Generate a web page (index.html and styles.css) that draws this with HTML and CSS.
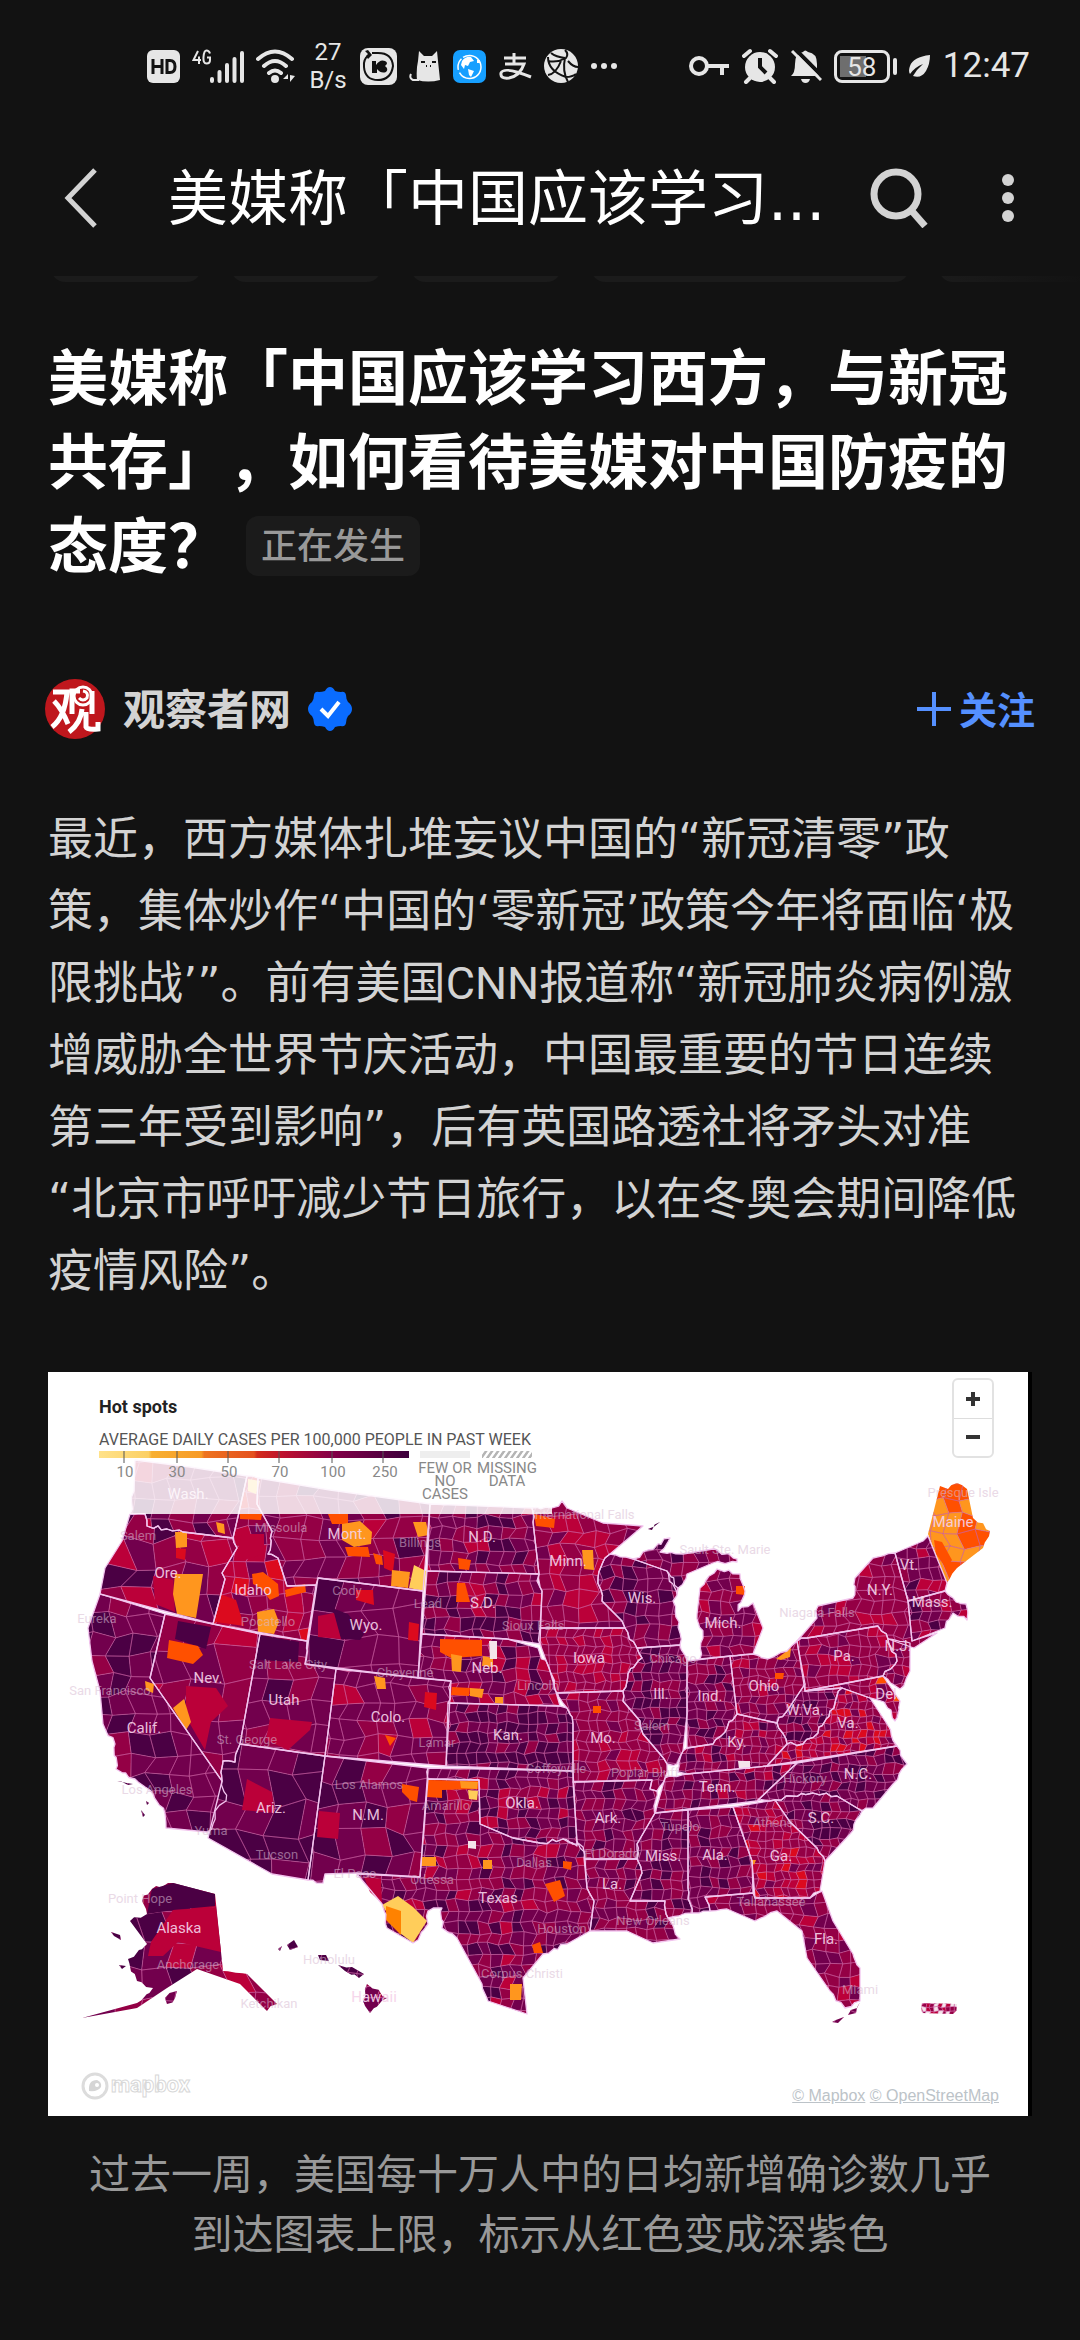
FILE: index.html
```html
<!DOCTYPE html>
<html lang="zh-CN">
<head>
<meta charset="utf-8">
<meta name="viewport" content="width=device-width, initial-scale=1">
<title>美媒称「中国应该学习西方,与新冠共存」</title>
<link rel="stylesheet" href="styles.css">
</head>
<body>
<div class="status">
  <div class="status-group">
    <svg class="icon" width="33" height="33" viewBox="0 0 33 33"><rect width="33" height="33" rx="6" fill="#e6e6e6"/><path d="M6 9v15M15 9v15M6 16.500h9M20 10.500h3q5 0 5 6t-5 6h-3z" fill="none" stroke="#121212" stroke-width="3"/></svg>
    <svg class="icon" width="52" height="36" viewBox="0 0 52 36" fill="none" stroke="#e6e6e6"><path d="M6 3 1.500 12H9M7 8.500V16M18 5.500q-1-3-3.500-3T11.500 9t3 6.500T18 12V9.500h-3" stroke-width="2"/><path d="M20 33v-2M27.500 33v-9M35 33V17M42.500 33v-22M50 33V5" stroke-width="4" stroke-linecap="round"/></svg>
    <svg class="icon" width="40" height="36" viewBox="0 0 40 36" fill="none" stroke="#e6e6e6" stroke-width="4" stroke-linecap="round"><path d="M2 11q17-15 34 0M8 18q11-10 22 0M13 25q6-5 12 0"/><circle cx="19" cy="31" r="2" fill="#e6e6e6"/><path d="M27 31h5v-5zM34 27v7l5-6z" fill="#e6e6e6" stroke="none"/></svg>
    <span class="speed"><span>27</span><span>B/s</span></span>
    <svg class="icon" width="37" height="37" viewBox="0 0 37 37"><rect width="37" height="37" rx="8" fill="#e6e6e6"/><path d="M9 7Q3 11 4 19q1 13 14 13t15-14Q32 5 18 5h-6" fill="none" stroke="#121212" stroke-width="2"/><path d="M12 13h4v4q4-6 9-4 4 2 0 5 4 3 1 6-5 2-9-3v4h-5zM8 2l4 5-4 4-2-3 2-2-3-3z" fill="#121212"/></svg>
    <svg class="icon" width="32" height="32" viewBox="0 0 32 32"><path d="M8 30Q7 20 9 11L10 1l5 5h8l5-5 1 10 2 19q-12 3-23 0z" fill="#e6e6e6"/><path d="M10 30H4q-4-2-2-6" fill="none" stroke="#e6e6e6" stroke-width="2"/><path d="M12 12h4M23 12h4M17 16h1M21 16h1" stroke="#121212" stroke-width="2"/></svg>
    <svg class="icon" width="33" height="33" viewBox="0 0 33 33"><rect width="33" height="33" rx="7" fill="#169fff"/><circle cx="16.500" cy="17" r="11.500" fill="none" stroke="#fff" stroke-width="1.500" stroke-dasharray="30 3 12 2"/><path d="M9 11q4-5 9-4l3 4-4 1-2 4-3-1-1 4-3-4zM15 19l6 2-3 6-2-2zM24 10h3v3h-3z" fill="#fff"/></svg>
    <svg class="icon" width="34" height="33" viewBox="0 0 34 33" fill="none" stroke="#e6e6e6" stroke-width="3"><path d="M6 8h22M16 3v10M7 14h19q-4 12-15 14Q2 29 3 23q3-7 30 4"/></svg>
    <svg class="icon" width="34" height="34" viewBox="0 0 34 34"><circle cx="17" cy="17" r="17" fill="#e6e6e6"/><path d="M7 4q5 4 14 5M21 1q4 4 1 8-9 5-18 3M21 9q-3 13 3 24M4 8q0 14 18 20M4 26q8-1 13-14M24 12q5 6 10 6M22 28q6 0 10-3" fill="none" stroke="#121212" stroke-width="2"/></svg>
    <svg class="icon" width="28" height="8" viewBox="0 0 28 8" fill="#e6e6e6"><circle cx="4" cy="4" r="3"/><circle cx="14" cy="4" r="3"/><circle cx="24" cy="4" r="3"/></svg>
  </div>
  <div class="status-group">
    <svg class="icon" width="41" height="24" viewBox="0 0 41 24" fill="none" stroke="#e6e6e6" stroke-width="4"><circle cx="10" cy="12" r="8"/><path d="M18 12h22M33 12v9"/></svg>
    <svg class="icon" width="36" height="36" viewBox="0 0 36 36"><circle cx="18" cy="19" r="15" fill="#e6e6e6"/><path d="M8 30l-4 4M28 30l4 4M2 8l6-5M28 3l6 5" stroke="#e6e6e6" stroke-width="4" stroke-linecap="round"/><path d="M18 10v9l6 6" fill="none" stroke="#121212" stroke-width="4"/></svg>
    <svg class="icon" width="32" height="36" viewBox="0 0 32 36"><path d="M1 28q4-3 4-12Q5 5 13 4q2-3 5 0 9 1 9 12v9l2 3zM11 31h9q-1 4-4.500 4T11 31z" fill="#e6e6e6"/><path d="M4 0l29 29" stroke="#121212" stroke-width="4"/><path d="M2 3l29 29" stroke="#e6e6e6" stroke-width="3"/></svg>
    <span class="battery">58</span>
    <svg class="icon" width="22" height="24" viewBox="0 0 22 24"><path d="M21 1Q4 3 1 12q-2 5 0 8Q6 13 14 10 8 15 4 22q8 3 13-5 4-7 4-16z" fill="#e6e6e6"/></svg>
    <time class="clock">12:47</time>
  </div>
</div>

<header class="appbar">
  <button class="icon-button" aria-label="返回"><svg width="34" height="60" viewBox="0 0 34 60"><path d="M31 2 4 30l27 28" fill="none" stroke="#d3d3d3" stroke-width="5"/></svg></button>
  <div class="appbar-title">美媒称「中国应该学习...</div>
  <button class="icon-button search" aria-label="搜索"><svg width="58" height="60" viewBox="0 0 58 60" fill="none" stroke="#d3d3d3" stroke-width="7"><circle cx="26" cy="26" r="22"/><path d="M41 42l14 16"/></svg></button>
  <button class="icon-button" aria-label="更多"><svg width="12" height="48" viewBox="0 0 12 48" fill="#d3d3d3"><circle cx="6" cy="6" r="6"/><circle cx="6" cy="24" r="6"/><circle cx="6" cy="42" r="6"/></svg></button>
</header>

<div class="chips"><i class="chip"></i><i class="chip"></i><i class="chip"></i><i class="chip chip-wide"></i><i class="chip chip-last"></i></div>

<main class="article">
  <h1 class="headline">美媒称「中国应该学习西方，与新冠共存」，如何看待美媒对中国防疫的态度？<span class="tag">正在发生</span></h1>

  <div class="author">
    <svg class="avatar" width="60" height="60" viewBox="0 0 60 60"><circle cx="30" cy="30" r="30" fill="#bf171d"/><path d="M8 13h14Q20 38 7 48M9 22q8 8 14 23M27 35V12h8M47 12v23M37 30q-1 14-13 23M41 33v15q1 3 12 2v-7" fill="none" stroke="#fff" stroke-width="5"/><circle cx="38" cy="17" r="9" fill="none" stroke="#fff" stroke-width="3"/><path d="M38 12q6 1 4 7-4 4-8 0" fill="none" stroke="#fff" stroke-width="3"/></svg>
    <span class="author-name">观察者网</span>
    <svg class="verified" width="46" height="46" viewBox="0 0 46 46"><path d="M23 1q3 0 5 4 3 1 6 1 4-1 5 3 0 4 2 7 4 3 4 7t-4 7q-2 3-2 7-1 4-5 3-3 0-6 1-2 4-5 4t-5-4q-3-1-6-1-4 1-5-3 0-4-2-7-4-3-4-7t4-7q2-3 2-7 1-4 5-3 3 0 6-1 2-4 5-4z" fill="#0a6cff"/><path d="M14 23l7 7 11-14" fill="none" stroke="#fff" stroke-width="4"/></svg>
    <button class="follow"><svg width="34" height="34" viewBox="0 0 34 34"><path d="M17 0v34M0 17h34" stroke="#5590ff" stroke-width="4"/></svg>关注</button>
  </div>

  <p class="body-text">最近，西方媒体扎堆妄议中国的“新冠清零”政策，集体炒作“中国的‘零新冠’政策今年将面临‘极限挑战’”。前有美国<span class="latin">CNN</span>报道称“新冠肺炎病例激增威胁全世界节庆活动，中国最重要的节日连续第三年受到影响”，后有英国路透社将矛头对准“北京市呼吁减少节日旅行，以在冬奥会期间降低疫情风险”。</p>

  <figure class="figure">
    <div class="map">
      <svg class="map-canvas" viewBox="0 0 980 744" role="img" aria-label="Hot spots">
        <defs>
          <pattern id="hatch" width="6" height="7" patternUnits="userSpaceOnUse" patternTransform="skewX(-35)"><rect width="3" height="7" fill="#b5b5b5"/></pattern>
          <linearGradient id="scale"><stop offset="0" stop-color="#ffe28a"/><stop offset=".16" stop-color="#fcd064"/><stop offset=".17" stop-color="#f8b032"/><stop offset=".33" stop-color="#f79a26"/><stop offset=".34" stop-color="#ee7420"/><stop offset=".5" stop-color="#e4501e"/><stop offset=".51" stop-color="#d32c1c"/><stop offset=".6" stop-color="#bc1030"/><stop offset=".75" stop-color="#850048"/><stop offset="1" stop-color="#3c003c"/></linearGradient>
        </defs>
        <g id="states"></g>
        <g id="cities" class="city"></g>
        <g id="names" class="state-name"></g>
        <rect x="40" y="70" width="464" height="72" fill="#fff" opacity=".84"/>
        <text class="map-title" x="51" y="41">Hot spots</text>
        <text class="legend-title" x="51" y="73">AVERAGE DAILY CASES PER 100,000 PEOPLE IN PAST WEEK</text>
        <rect x="51" y="79" width="310" height="7" fill="url(#scale)"/>
        <path d="M76 79v12M129 79v12M180 79v12M231 79v12M284 79v12M335 79v12" stroke="#555"/>
        <rect x="372" y="79" width="50" height="7" fill="#eee"/>
        <rect x="434" y="79" width="50" height="7" fill="url(#hatch)"/>
        <g class="legend-label">
          <text x="77" y="105">10</text><text x="129" y="105">30</text><text x="181" y="105">50</text><text x="232" y="105">70</text><text x="285" y="105">100</text><text x="337" y="105">250</text>
          <text x="397" y="101">FEW OR</text><text x="397" y="114">NO</text><text x="397" y="127">CASES</text>
          <text x="459" y="101">MISSING</text><text x="459" y="114">DATA</text>
        </g>
        <circle cx="47" cy="714" r="12" fill="#fff" stroke="#dcdcdc" stroke-width="3"/>
        <path d="M41 719q-1-11 8-11 5 2 4 7-3 5-12 4z" fill="#d5d5d5"/><circle cx="49" cy="713" r="2" fill="#fff"/>
        <text class="map-brand" x="63" y="720">mapbox</text>
      </svg>
      <div class="zoom">
        <button class="zoom-button" aria-label="放大"><svg width="16" height="16" viewBox="0 0 16 16"><path d="M8 1v14M1 8h14" stroke="#333" stroke-width="4"/></svg></button>
        <button class="zoom-button" aria-label="缩小"><svg width="16" height="16" viewBox="0 0 16 16"><path d="M1 8h14" stroke="#333" stroke-width="4"/></svg></button>
      </div>
      <div class="credits"><a href="#mapbox">© Mapbox</a> <a href="#osm">© OpenStreetMap</a></div>
    </div>
    <figcaption class="caption">过去一周，美国每十万人中的日均新增确诊数几乎到达图表上限，标示从红色变成深紫色</figcaption>
  </figure>
</main>
<script src="map.js"></script>
</body>
</html>
```

FILE: styles.css
```css
* { box-sizing: border-box; }

body {
  margin: 0;
  background: #121212;
  color: #d3d3d3;
  font-family: "Noto Sans", "Noto Sans CJK SC", sans-serif;
  text-spacing-trim: space-all;
  overflow-x: hidden;
}

button {
  display: flex;
  align-items: center;
  padding: 0;
  border: 0;
  background: none;
  color: inherit;
  font: inherit;
}

svg { display: block; flex: none; }

.status {
  display: flex;
  justify-content: space-between;
  align-items: center;
  height: 132px;
  padding: 0 50px 0 147px;
  color: #e6e6e6;
  font-family: Roboto, sans-serif;
}

.status-group { display: flex; align-items: center; gap: 12px; }

.speed {
  display: flex;
  flex-direction: column;
  align-items: center;
  width: 40px;
  font-size: 24px;
  line-height: 28px;
}

.battery {
  position: relative;
  width: 56px;
  height: 33px;
  margin-right: 7px;
  border: 3px solid #e6e6e6;
  border-radius: 8px;
  background: linear-gradient(#6e6e6e, #6e6e6e) 3px 3px / 26px 21px no-repeat;
  font-size: 26px;
  line-height: 28px;
  text-align: center;
}

.battery::after {
  content: "";
  position: absolute;
  top: 5px;
  right: -10px;
  width: 4px;
  height: 17px;
  border-radius: 2px;
  background: #e6e6e6;
}

.clock { font-size: 35px; line-height: 40px; }

.appbar {
  display: flex;
  align-items: center;
  height: 144px;
  padding: 0 66px 12px 64px;
}

.appbar-title {
  flex: 1;
  margin-left: 70px;
  padding-top: 2px;
  color: #fff;
  font-family: "DejaVu Sans", "Noto Sans CJK SC", sans-serif;
  font-size: 60px;
  line-height: 72px;
  white-space: nowrap;
}

.search { margin-right: 74px; }

.chips {
  display: flex;
  align-items: flex-end;
  gap: 30px;
  height: 6px;
  padding-left: 51px;
  overflow: hidden;
}

.chip {
  flex: none;
  width: 150px;
  height: 60px;
  border-radius: 14px;
  background: #1b1b1b;
}

.chip-wide { width: 318px; }

.chip-last { background: linear-gradient(90deg, #1b1b1b, #121212); }

.article { padding: 53px 48px 0; }

.headline {
  margin: 0;
  color: #fff;
  font-size: 60px;
  font-weight: 700;
  line-height: 84px;
}

.tag {
  display: inline-block;
  margin: 0 0 12px 18px;
  padding: 0 15px;
  border-radius: 12px;
  background: #1b1b1b;
  color: #999;
  font-size: 36px;
  font-weight: 500;
  line-height: 60px;
  vertical-align: middle;
}

.author {
  display: flex;
  align-items: center;
  height: 60px;
  margin: 91px -3px 65px;
}

.author-name {
  margin: 0 16px 0 18px;
  font-size: 42px;
  font-weight: 700;
  line-height: 60px;
}

.follow {
  gap: 8px;
  margin-left: auto;
  color: #5590ff;
  font-size: 38px;
  font-weight: 700;
  line-height: 60px;
}

.body-text {
  margin: 0 0 64px;
  padding-right: 10px;
  font-family: "DejaVu Sans", "Noto Sans CJK SC", sans-serif;
  font-size: 45px;
  line-height: 72px;
}

.latin { font-family: Roboto, sans-serif; }

.figure { margin: 0; }

.map {
  position: relative;
  border-right: 4px solid #000;
  background: #fff;
}

.map-canvas {
  width: 100%;
  height: auto;
  font-family: Roboto, sans-serif;
}

.state-name {
  fill: #f6d3ea;
  font-size: 15px;
  opacity: .9;
  text-anchor: middle;
}

.city {
  fill: #d9bcd3;
  font-size: 13px;
  opacity: .55;
  text-anchor: middle;
}

.map-title { fill: #222; font-size: 18px; font-weight: 700; }

.legend-title { fill: #555; font-size: 16px; }

.legend-label { fill: #888; font-size: 15px; text-anchor: middle; }

.map-brand {
  fill: #fff;
  stroke: #d8d8d8;
  stroke-width: 1;
  font-size: 22px;
  font-weight: 700;
}

.zoom {
  position: absolute;
  top: 6px;
  right: 34px;
  width: 42px;
  border: 2px solid #e2e2e2;
  border-radius: 6px;
}

.zoom-button { justify-content: center; width: 100%; height: 38px; }

.zoom-button + .zoom-button { border-top: 1px solid #ddd; }

.credits {
  position: absolute;
  right: 29px;
  bottom: 10px;
  font-family: "Liberation Sans", sans-serif;
  font-size: 16px;
  line-height: 20px;
}

.credits a { color: #bcc3c8; }

.caption {
  padding: 27px 36px 48px;
  color: #999;
  font-size: 41px;
  line-height: 60px;
  text-align: center;
}
```

FILE: map.js
```js
const SVG = "http://www.w3.org/2000/svg";
const COLORS = ["#4b0044", "#72004d", "#940045", "#bb0039", "#dc0a1e", "#ff5000", "#ff961e", "#ffcd5a", "#f4e4ea"];

// [outline, county size, colour mix]
const STATES = [
  ["87,88 142,95 199,104 192,136 185,166 135,160 119,157 99,154 97,142 82,142 86,119", 20, "1122301"],
  ["82,142 97,142 99,154 119,157 135,160 185,166 189,176 174,201 177,207 165,252 52,222 57,196 74,169", 26, "0112231"],
  ["199,104 210,106 209,132 224,159 220,182 230,186 239,214 268,213 259,269 165,252 177,207 174,201 189,176 185,166 192,136", 17, "1223342"],
  ["210,106 282,118 382,132 375,219 270,206 268,213 239,214 230,186 220,182 224,159 209,132", 20, "1223210"],
  ["270,206 375,219 370,306 257,292", 30, "1111201"],
  ["212,262 259,269 257,292 288,297 277,384 192,372", 23, "1101221"],
  ["117,242 212,262 192,372 187,390 175,389 174,409 102,306", 34, "1132112"],
  ["52,222 117,242 102,306 174,409 178,429 167,439 165,452 159,460 118,456 117,442 105,422 87,407 68,397 67,372 55,352 52,319 44,289 40,256", 20, "0112011"],
  ["174,409 175,389 187,390 192,372 277,384 260,508 224,502 160,466", 30, "0010010"],
  ["288,297 403,309 398,394 277,384", 17, "1121321"],
  ["277,384 380,396 372,505 309,501 277,502 275,511 260,508", 25, "0010121"],
  ["382,132 484,136 485,150 491,202 379,199", 12, "0123112"],
  ["379,199 491,202 489,209 494,219 492,272 459,267 374,262", 12, "0123120"],
  ["374,262 459,267 490,276 502,299 512,334 400,331 403,309 370,306", 12, "1120213"],
  ["400,331 512,334 519,336 525,352 525,399 398,394", 10, "0010120"],
  ["380,396 525,399 529,474 515,467 492,471 465,466 432,452 431,408 380,407", 10, "0121130"],
  ["380,407 431,408 432,452 465,466 492,471 515,467 535,475 536,486 539,516 546,529 542,559 519,572 495,582 475,606 479,642 440,629 434,612 409,566 394,556 394,536 380,539 380,552 365,571 339,556 334,532 309,502 372,505", 11, "0121123"],
  ["484,136 504,136 514,129 519,136 555,151 595,154 562,182 557,186 550,206 554,229 574,249 577,256 492,256 494,219 491,202 485,150", 15, "2323132"],
  ["492,256 577,256 589,276 594,286 580,302 575,319 509,321 502,299 492,272", 9, "2232233"],
  ["557,186 562,182 585,187 619,199 630,216 625,229 631,250 632,273 589,276 577,256 574,249 554,229 550,206", 12, "0112012"],
  ["585,187 600,178 622,166 612,180 635,182 665,177 689,187 689,190 665,191 639,202 629,222 619,199", 12, "0012102"],
  ["669,197 692,202 697,219 690,239 705,231 715,256 705,282 652,287 655,266 649,242 652,216", 11, "1212132"],
  ["589,276 632,273 639,289 639,342 635,379 629,392 619,392 612,382 595,362 592,349 575,329 575,319 580,302 594,286", 9, "0011012"],
  ["509,321 575,319 575,329 592,349 595,362 612,382 619,392 617,406 609,419 602,417 604,408 525,410 525,352 519,336", 10, "1222132"],
  ["639,289 682,284 689,342 679,356 665,372 639,376", 9, "1221012"],
  ["682,284 705,282 720,287 739,279 749,269 757,312 739,339 729,351 689,342", 9, "1232121"],
  ["635,379 639,376 665,372 679,356 689,342 729,351 739,372 719,394 639,402 630,400", 8, "1223012"],
  ["617,406 639,402 719,394 749,391 709,429 607,441", 9, "1212230"],
  ["525,410 604,408 602,417 609,419 607,441 589,472 589,487 537,487 529,469", 10, "1120121"],
  ["537,487 589,487 594,501 582,529 617,529 620,546 632,567 605,571 579,559 542,559 546,529 539,516", 10, "1120212"],
  ["607,441 640,438 640,516 644,541 620,546 617,529 582,529 594,501 589,487 589,472", 10, "1120210"],
  ["640,438 685,435 704,489 705,521 657,525 662,539 644,541 640,516", 10, "0120121"],
  ["685,435 727,428 742,450 769,476 777,489 772,519 762,526 707,526 704,489", 8, "2312423"],
  ["727,428 742,424 765,421 789,424 814,439 802,462 777,489 769,476 742,450", 9, "0110120"],
  ["709,429 749,391 849,374 859,392 845,412 825,436 814,439 789,424 765,421 742,424 727,428", 9, "0110121"],
  ["657,525 705,521 707,526 762,526 774,519 785,549 805,582 812,596 812,629 797,636 782,619 759,586 754,559 729,539 707,549 679,537 662,539", 12, "1221232"],
  ["719,394 739,372 755,372 770,361 782,339 794,316 822,326 839,352 849,374", 7, "2322314"],
  ["729,351 739,339 757,312 757,319 794,316 782,339 770,361 755,372 739,372", 8, "0121012"],
  ["757,319 835,304 852,329 847,349 836,330 822,326 794,316", 9, "2241235"],
  ["749,269 759,266 830,254 840,267 849,289 835,304 757,319", 10, "2322231"],
  ["840,267 862,271 862,299 852,317 835,304 849,289", 9, "1223212"],
  ["749,269 769,246 770,234 805,226 807,206 825,186 847,181 860,229 864,269 889,261 866,276 840,267 830,254 759,266", 12, "2223212"],
  ["847,181 875,169 880,164 899,211 897,219 860,229", 11, "1123012"],
  ["860,229 897,219 908,230 918,232 919,248 905,241 897,256 864,269", 10, "1120312"],
  ["880,162 892,114 900,117 909,111 919,117 925,146 942,159 935,176 909,196 899,211", 16, "6566556"],
  ["125,511 167,522 175,599 199,602 229,632 219,639 192,612 149,597 119,616 89,636 34,646 89,631 105,616 89,609 80,587 99,572 82,549 99,542 94,529 104,517", 28, "0120232"],
  ["239,573 246,568 250,575 242,578", 9, "0"], ["270,583 278,583 281,589 272,588", 9, "0"],
  ["290,593 304,595 316,602 311,606 297,599", 9, "0"], ["319,612 339,626 322,641 315,629", 14, "12"],
  ["230,577 234,574 232,579", 9, "0"], ["63,560 72,563 73,568 66,564", 9, "0"], ["71,593 78,594 74,597", 9, "0"],
  ["117,626 129,619 127,626 119,632", 9, "1"], ["69,409 85,412 80,413", 9, "0"], ["93,438 97,443 95,445", 9, "0"], ["98,429 101,431 99,433", 9, "0"],
  ["600,157 612,150 604,158", 9, "0"], ["784,650 796,645 790,651", 9, "1"], ["800,643 809,636 812,630 808,641", 9, "1"],
  ["874,631 909,632 905,642 874,641", 4, "3823"]
];

const PATCHES = {
  0: ["284,236 300,242 316,262 312,268 293,267 286,244", "130,249 163,255 158,277 127,267", "212,263 251,270 250,290 208,288", "104,517 125,511 167,522 167,534 125,538 99,542"],
  3: ["270,244 286,241 293,267 270,265", "138,314 168,316 180,334 163,350 157,378 138,345", "222,346 264,350 262,358 240,378 218,368", "199,407 224,420 226,441 194,438", "271,439 292,441 290,467 269,465", "316,505 333,507 334,531 322,520", "194,162 216,162 216,182 196,188 190,178", "105,204 125,208 127,240 107,232", "125,538 168,535 173,580 130,570 115,584 100,584 103,570"],
  4: ["128,176 138,177 137,188 128,186", "172,222 188,228 196,254 168,250", "335,178 347,182 345,200 336,196", "308,218 325,218 326,233 308,228", "361,250 371,252 370,269 360,268", "377,320 389,321 388,338 376,335"],
  5: ["204,202 215,200 230,212 231,224 222,228 213,216 205,212", "237,218 257,212 258,220 238,225", "280,142 300,142 300,152 284,152", "325,181 334,184 335,193 328,192", "297,175 320,175 322,185 300,184", "192,142 214,142 213,148 192,147", "121,268 150,274 155,283 145,292 119,286", "354,412 371,415 369,430 362,428 354,420", "392,267 434,268 434,284 403,286 392,280", "404,315 422,316 421,324 403,323", "337,363 348,366 342,374", "409,211 417,211 422,230 408,230", "410,186 423,188 421,198 411,197", "486,142 507,147 506,156 488,154", "688,214 697,214 697,223 688,222", "727,301 736,301 735,307 727,307", "380,408 430,409 430,417 394,418 394,426 379,425", "484,573 492,570 495,581 486,581", "497,512 512,508 517,524 506,530", "515,489 524,490 523,498 515,496", "545,334 553,334 553,341 545,341", "886,168 894,170 904,188 898,196 888,182"],
  6: ["127,202 155,202 148,246 129,242 125,222", "127,160 139,160 139,175 128,176", "168,150 176,152 177,162 170,160", "209,240 226,237 231,250 226,262 210,260", "294,152 312,149 324,160 323,172 306,175 294,168", "365,150 378,150 381,163 370,165", "344,198 362,200 360,216 343,214", "125,336 136,327 143,350 138,358", "97,309 106,312 105,321 98,318", "403,282 414,284 413,300 404,299", "435,284 445,286 445,295 434,294", "422,316 436,317 434,326 422,324", "447,325 455,325 455,332 447,331", "326,304 337,306 338,317 329,317", "534,178 545,178 546,198 536,197", "728,287 743,276 742,285 733,288", "412,409 430,410 429,417 413,416", "373,485 388,485 388,494 373,494", "435,488 444,488 444,497 435,497", "462,612 474,612 473,628 462,628", "702,488 708,488 706,493"],
  7: ["366,193 378,199 376,219 361,216", "200,107 212,109 208,122 200,119", "420,418 430,419 429,428 421,427", "334,533 350,524 365,535 379,549 372,560 365,571 352,561"],
  8: ["441,269 449,269 449,287 442,287", "420,469 428,469 428,477 420,476", "690,389 702,389 702,397 691,397"]
};

const NAMES = "Wash.,140,122|Ore.,120,201|Idaho,205,218|Mont.,299,162|N.D.,434,165|S.D.,435,231|Wyo.,318,253|Nev.,160,306|Utah,236,328|Colo.,340,345|Calif.,96,356|Neb.,439,296|Kan.,460,363|Minn.,520,189|Wis.,594,226|Mich.,675,251|Iowa,541,286|Ill.,613,322|Ind.,662,324|Ohio,716,314|Pa.,796,284|N.Y.,832,218|Vt.,861,193|Mass.,884,230|N.J.,850,274|W.Va.,757,338|Va.,800,351|Maine,905,150|Mo.,555,366|Del.,840,322|Ariz.,223,436|N.M.,320,443|Okla.,474,431|Texas,450,526|Alaska,131,556|Hawaii,326,625|Ky.,689,370|Tenn.,669,415|N.C.,810,402|S.C.,773,446|Ark.,560,446|Miss.,615,484|Ala.,667,483|Ga.,733,484|La.,564,512|Fla.,778,567";
const CITIES = "Salem,90,163|Missoula,233,155|Billings,372,170|Cody,299,218|Lead,380,231|Salt Lake City,240,292|Cheyenne,357,300|Eureka,49,246|San Francisco,62,318|St. George,199,367|Los Angeles,109,417|Yuma,163,458|Tucson,229,482|Los Alamos,321,412|Amarillo,398,433|Lamar,389,370|El Paso,307,501|Odessa,384,507|Dallas,486,490|Houston,514,556|Corpus Christi,474,601|Point Hope,92,526|Anchorage,140,592|Ketchikan,221,631|Honolulu,281,587|Pocatello,220,249|Sioux Falls,485,253|Lincoln,490,313|International Falls,535,142|Sault Ste. Marie,677,177|Presque Isle,915,120|Niagara Falls,769,240|Chicago,625,286|Salem,604,353|Poplar Bluff,597,400|Hickory,757,406|Tupelo,632,454|El Dorado,564,481|Athens,725,450|Tallahassee,723,529|New Orleans,605,548|Miami,812,617|Coffeyville,508,396";

let seed = 7;
function random() {
  seed = (seed * 16807) % 2147483647;
  return seed / 2147483647;
}

function add(parent, name, attributes) {
  const node = document.createElementNS(SVG, name);
  for (const key in attributes) node.setAttribute(key, attributes[key]);
  parent.appendChild(node);
  return node;
}

// Roughens short border segments so that coasts and rivers look natural.
function roughen(points) {
  const out = [];
  points.forEach((p, i) => {
    const q = points[(i + 1) % points.length];
    const length = Math.hypot(q[0] - p[0], q[1] - p[1]);
    out.push(p);
    if (length > 26) return;
    const steps = Math.floor(length / 5);
    const key = (p[0] + q[0]) * 13 + (p[1] + q[1]) * 7;
    for (let k = 1; k < steps; k++) {
      const at = p[0] < q[0] ? k : steps - k;
      const t = k / steps;
      out.push([p[0] + (q[0] - p[0]) * t + Math.sin(key + at * 5) * 1.6, p[1] + (q[1] - p[1]) * t + Math.cos(key + at * 3) * 1.6]);
    }
  });
  return out;
}

const layer = document.getElementById("states");
const borders = [];
STATES.forEach(([outline, size, mix], index) => {
  const points = roughen(outline.split(" ").map(p => p.split(",").map(Number)));
  const shape = points.map(p => p[0].toFixed(1) + "," + p[1].toFixed(1)).join(" ");
  borders.push(shape);
  const clip = add(layer, "clipPath", { id: "state" + index });
  add(clip, "polygon", { points: shape });
  const group = add(layer, "g", { "clip-path": "url(#state" + index + ")" });
  const xs = points.map(p => p[0]), ys = points.map(p => p[1]);
  const left = Math.min(...xs) - size, top = Math.min(...ys) - size;
  const cols = Math.ceil((Math.max(...xs) - left) / size) + 1;
  const rows = Math.ceil((Math.max(...ys) - top) / size) + 1;
  const grid = [];
  for (let r = 0; r <= rows; r++) {
    grid.push([]);
    for (let c = 0; c <= cols; c++) {
      const x = left + (c + (r % 2) * 0.3 + (random() - 0.5) * 0.4) * size;
      const y = top + (r + (random() - 0.5) * 0.4) * size;
      grid[r].push(x.toFixed(1) + " " + y.toFixed(1));
    }
  }
  const paths = {};
  for (let r = 0; r < rows; r++) {
    for (let c = 0; c < cols; c++) {
      const color = mix[Math.floor(random() * mix.length)];
      paths[color] = (paths[color] || "") + "M" + grid[r][c] + "L" + grid[r][c + 1] + "L" + grid[r + 1][c + 1] + "L" + grid[r + 1][c] + "Z";
    }
  }
  for (const color in paths) {
    add(group, "path", { d: paths[color], fill: COLORS[color], stroke: "#cc64a4", "stroke-width": 0.6, "stroke-opacity": 0.8 });
  }
});
for (const color in PATCHES) {
  PATCHES[color].forEach(points => add(layer, "polygon", { points, fill: COLORS[color] }));
}
add(layer, "polygon", { points: "338,534 353,539 353,563 338,548", fill: "#ff8200" });
borders.forEach((points, i) => {
  if (i < 44) add(layer, "polygon", { points, fill: "none", stroke: "#f2c4ee", "stroke-width": 1.3, "stroke-linejoin": "round" });
});

function label(id, list) {
  const parent = document.getElementById(id);
  list.split("|").forEach(item => {
    const [text, x, y] = item.split(",");
    add(parent, "text", { x, y: Number(y) + 5 }).textContent = text;
  });
}
label("names", NAMES);
label("cities", CITIES);
```
